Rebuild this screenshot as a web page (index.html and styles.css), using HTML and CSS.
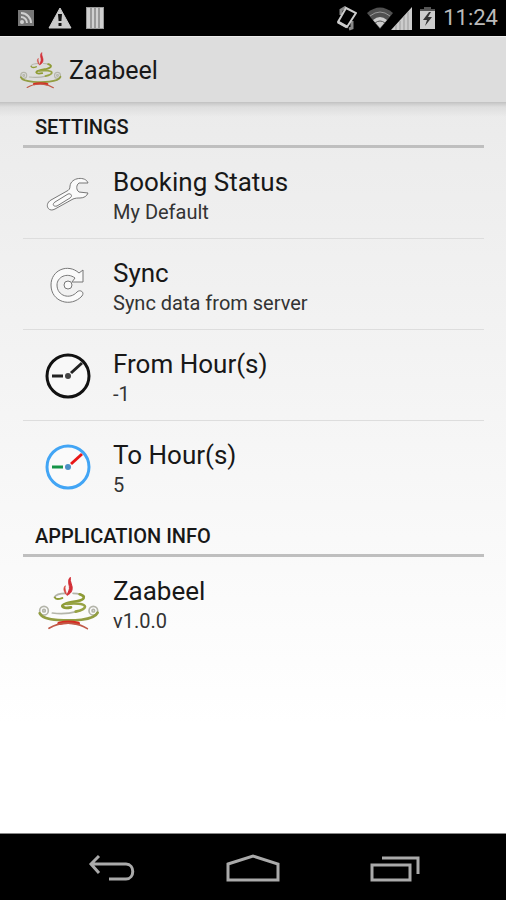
FILE: index.html
```html
<!DOCTYPE html>
<html lang="en">
<head>
<meta charset="utf-8">
<meta name="viewport" content="width=device-width, initial-scale=1">
<title>Zaabeel</title>
<link rel="stylesheet" href="styles.css">
</head>
<body>
<svg class="defs" aria-hidden="true">
  <symbol id="logo" viewBox="15 15 195 171">
    <g fill="none" stroke-linecap="round">
      <g stroke="#b4b5aa" stroke-width="5">
        <path d="M70 82c4-8 18-12 34-12M126 70c14 0 28 3 34 9"/>
        <path d="M64 129c24 3 50 2 72-4"/>
        <circle cx="39" cy="122" r="13"/><circle cx="187" cy="122" r="13"/>
        <circle cx="39" cy="122" r="4"/><circle cx="187" cy="122" r="4"/>
      </g>
      <path d="M72 83c4 8 14 4 22 1" stroke="#8f9c35" stroke-width="6"/>
      <path d="M146 73c20 6 14 16-6 20-20 4-48 8-46 16 2 5 16 5 26 3" stroke="#8f9c35" stroke-width="8"/>
      <path d="M108 102c20-3 54-2 54 8 0 6-12 11-28 15" stroke="#98a344" stroke-width="8"/>
      <path d="M26 130c6 14 32 19 55 20 40 3 108 2 119-22" stroke="#929d42" stroke-width="8"/>
      <path d="M84 160c17-4 40-4 58 0" stroke="#d62c21" stroke-width="10"/>
      <path d="M54 175c20-12 44-17 68-15 20 2 35 8 47 16" stroke="#c15b49" stroke-width="5"/>
    </g>
    <path d="M118 22c-3 13 9 26 5 38-2 8-8 13-15 16 3-10 9-17 7-27-2-10-5-19 3-27z" fill="#d32f37" stroke="#d32f37" stroke-width="3"/>
    <path d="M103 47c-3 9 2 17 4 28-8-9-12-20-4-28z" fill="#d4483f" stroke="#d4483f" stroke-width="2"/>
  </symbol>
</svg>

<header class="status">
  <div class="status-group">
    <svg width="16" height="16" viewBox="0 0 16 16"><path fill="#777" d="M0 0h16v16H0z"/><g fill="none" stroke="#d0d0d0" stroke-width="2"><path d="M3 3a10 10 0 0 1 10 10M3 7a6 6 0 0 1 6 6"/></g><circle cx="4" cy="12" r="2" fill="#d0d0d0"/></svg>
    <svg width="24" height="22" viewBox="0 0 24 22"><path fill="#ccc" stroke="#ccc" stroke-linejoin="round" d="M12 1l11 20H1z"/><path fill="#111" d="M10 7h4l-.6 7h-2.8zM10.500 16h3v3h-3z"/></svg>
    <svg width="18" height="22" viewBox="0 0 18 22"><path fill="#999" d="M0 0h18v22H0z"/><path fill="#d0d0d0" d="M1 1h3v20H1zM6 1h2v20H6zM10 1h2v20h-2zM14 1h3v20h-3z"/></svg>
  </div>
  <div class="status-group status-right">
    <svg class="vibrate" width="20" height="25" viewBox="0 0 20 25"><g fill="none" stroke-width="2"><path d="M9 1L4 4v5M12 23l3-1v-7" stroke="#888" stroke-width="3"/><path d="M9 2l10 5-9 14-9-5z" fill="#000" stroke="#ccc"/><path d="M1 16l9 5" stroke="#ccc" stroke-width="3"/></g></svg>
    <svg width="26" height="22" viewBox="0 0 26 22"><path fill="#505050" d="M0 6Q13-5 26 6L13 22z"/><path fill="none" stroke="#999" d="M3 9q10-8 20 0"/><path fill="#ccc" d="M6 13q7-6 14 0l-7 8z"/><path fill="none" stroke="#555" d="M8 16q5-4 10 0"/></svg>
    <svg class="signal" width="21" height="23" viewBox="0 0 21 23"><path fill="#ccc" d="M21 0v23H0z"/><path stroke="#999" d="M5 18v5M9 14v9M13 9v14M17 5v18"/></svg>
    <svg class="battery" width="15" height="22" viewBox="0 0 15 22"><path fill="#555" d="M4 0h7v2h4v3H0V2h4z"/><path fill="#ccc" d="M0 4h15v18H0z"/><path fill="#333" d="M9 5l-6 8h4l-2 6 7-9H8l3-5z"/></svg>
    <time class="clock">11:24</time>
  </div>
</header>

<div class="appbar">
  <svg class="appbar-logo" aria-hidden="true"><use href="#logo"/></svg>
  <h1>Zaabeel</h1>
</div>

<main>
  <section>
    <h2>Settings</h2>
    <ul>
      <li><button class="row" type="button">
        <span class="icon"><svg width="44" height="36" viewBox="0 0 44 36"><g fill="#fafafa" stroke="#777" stroke-linejoin="round"><path d="M42 7C40 0 25 1 24 10c0 3-1 4-3 5L5 24c-7 4-3 13 4 9l18-10c3-1 4-1 7-1 4 0 7-2 8-5l-9-1c-3-2-3-7 0-9z"/><path d="M9 26l13-8c3-1 5 2 2 4l-13 8c-4 1-5-2-2-4z"/></g></svg></span>
        <span class="text"><span class="title">Booking Status</span><span class="sub">My Default</span></span>
      </button></li>
      <li><button class="row" type="button">
        <span class="icon"><svg width="36" height="36" viewBox="0 0 36 36"><g fill="#fafafa" stroke="#777" stroke-linejoin="round"><path d="M29 6l4-3v12H22l3-4C17 5 7 10 7 18c0 11 13 15 20 7 3-3 8 0 5 4C21 41 1 35 1 18 1 3 18-4 29 6z"/><circle cx="18" cy="18" r="4"/></g></svg></span>
        <span class="text"><span class="title">Sync</span><span class="sub">Sync data from server</span></span>
      </button></li>
      <li><button class="row" type="button">
        <span class="icon"><svg width="46" height="46" viewBox="0 0 46 46"><circle cx="23" cy="23" r="21" fill="#f8f8f8" stroke="#111" stroke-width="3"/><path d="M7 23h11M26 20l11-10" stroke="#222" stroke-width="3"/><circle cx="23" cy="23" r="3" fill="#444"/></svg></span>
        <span class="text"><span class="title">From Hour(s)</span><span class="sub">-1</span></span>
      </button></li>
      <li><button class="row" type="button">
        <span class="icon"><svg width="46" height="46" viewBox="0 0 46 46"><circle cx="23" cy="23" r="21" fill="#fafafa" stroke="#42a5f5" stroke-width="3"/><path d="M7 23h11" stroke="#159447" stroke-width="3"/><path d="M26 20l11-10" stroke="#e81616" stroke-width="3"/><circle cx="23" cy="23" r="3" fill="#4b8fc5"/></svg></span>
        <span class="text"><span class="title">To Hour(s)</span><span class="sub">5</span></span>
      </button></li>
    </ul>
  </section>
  <section>
    <h2>Application Info</h2>
    <ul>
      <li><button class="row" type="button">
        <span class="icon"><svg class="row-logo"><use href="#logo"/></svg></span>
        <span class="text"><span class="title">Zaabeel</span><span class="sub">v1.0.0</span></span>
      </button></li>
    </ul>
  </section>
</main>

<nav>
  <button type="button" aria-label="Back"><svg width="48" height="28" viewBox="0 0 48 28"><path d="M12 2L4 10l8 9M4 10h35c9 0 9 15 0 15H22"/></svg></button>
  <button type="button" aria-label="Home"><svg width="54" height="28" viewBox="0 0 54 28"><path d="M2 10l25-8 25 8v16H2z"/></svg></button>
  <button type="button" aria-label="Recent apps"><svg width="50" height="28" viewBox="0 0 50 28"><path d="M2 11h38v15H2zM12 4h36v16"/></svg></button>
</nav>
</body>
</html>
```

FILE: styles.css
```css
* {
  box-sizing: border-box;
}

body {
  margin: 0;
  min-height: 100vh;
  display: flex;
  flex-direction: column;
  font-family: Roboto, "Liberation Sans", sans-serif;
  color: #181818;
  background: #fff;
}

.defs {
  display: none;
}

.status {
  display: flex;
  justify-content: space-between;
  align-items: center;
  height: 36px;
  padding: 0 8px 0 18px;
  background: #000;
}

.status-group {
  display: flex;
  align-items: center;
  gap: 14px;
}

.status-right {
  gap: 0;
}

.vibrate {
  margin-right: 10px;
}

.signal {
  margin-left: -2px;
}

.battery {
  margin: 0 8px;
}

.clock {
  font-size: 22px;
  line-height: 38px;
  color: #bbb;
}

.appbar {
  display: flex;
  align-items: center;
  gap: 6px;
  height: 67px;
  padding: 2px 18px 0;
  background: #ddd;
  border-top: 1px solid #eee;
  border-bottom: 1px solid #c4c4c4;
}

.appbar-logo {
  width: 45px;
  height: 39px;
}

h1 {
  margin: 0;
  font-size: 25px;
  font-weight: 400;
}

main {
  flex: 1;
  padding: 0 22px 0 23px;
  background:
    linear-gradient(#c8c8c8, #dedede 4px, #ebebeb00 14px),
    linear-gradient(#ebebeb, #fff 85%);
}

h2 {
  margin: 0;
  height: 45px;
  padding: 0 12px;
  border-bottom: 3px solid #bfbfbf;
  font-size: 20px;
  font-weight: 500;
  line-height: 48px;
  text-transform: uppercase;
}

ul {
  margin: 0;
  padding: 0;
  list-style: none;
}

li {
  border-bottom: 1px solid #ddd;
}

li:last-child {
  border-color: transparent;
}

button {
  border: 0;
  background: none;
  color: inherit;
  font: inherit;
}

.row {
  display: flex;
  align-items: center;
  width: 100%;
  height: 90px;
  padding: 2px 0 0;
  text-align: left;
}

.icon {
  display: flex;
  justify-content: center;
  width: 90px;
}

.row-logo {
  width: 65px;
  height: 57px;
}

.text {
  display: flex;
  flex-direction: column;
  padding-top: 2px;
}

.title {
  font-size: 26px;
  line-height: 34px;
}

.sub {
  font-size: 20px;
  line-height: 26px;
  color: #333;
}

nav {
  display: flex;
  justify-content: center;
  gap: 20px;
  height: 67px;
  padding-top: 2px;
  background: #000;
  border-top: 1px solid #888;
}

nav button {
  display: flex;
  justify-content: center;
  align-items: center;
  width: 122px;
}

nav svg {
  fill: none;
  stroke: #aaa;
  stroke-width: 3;
}
```
